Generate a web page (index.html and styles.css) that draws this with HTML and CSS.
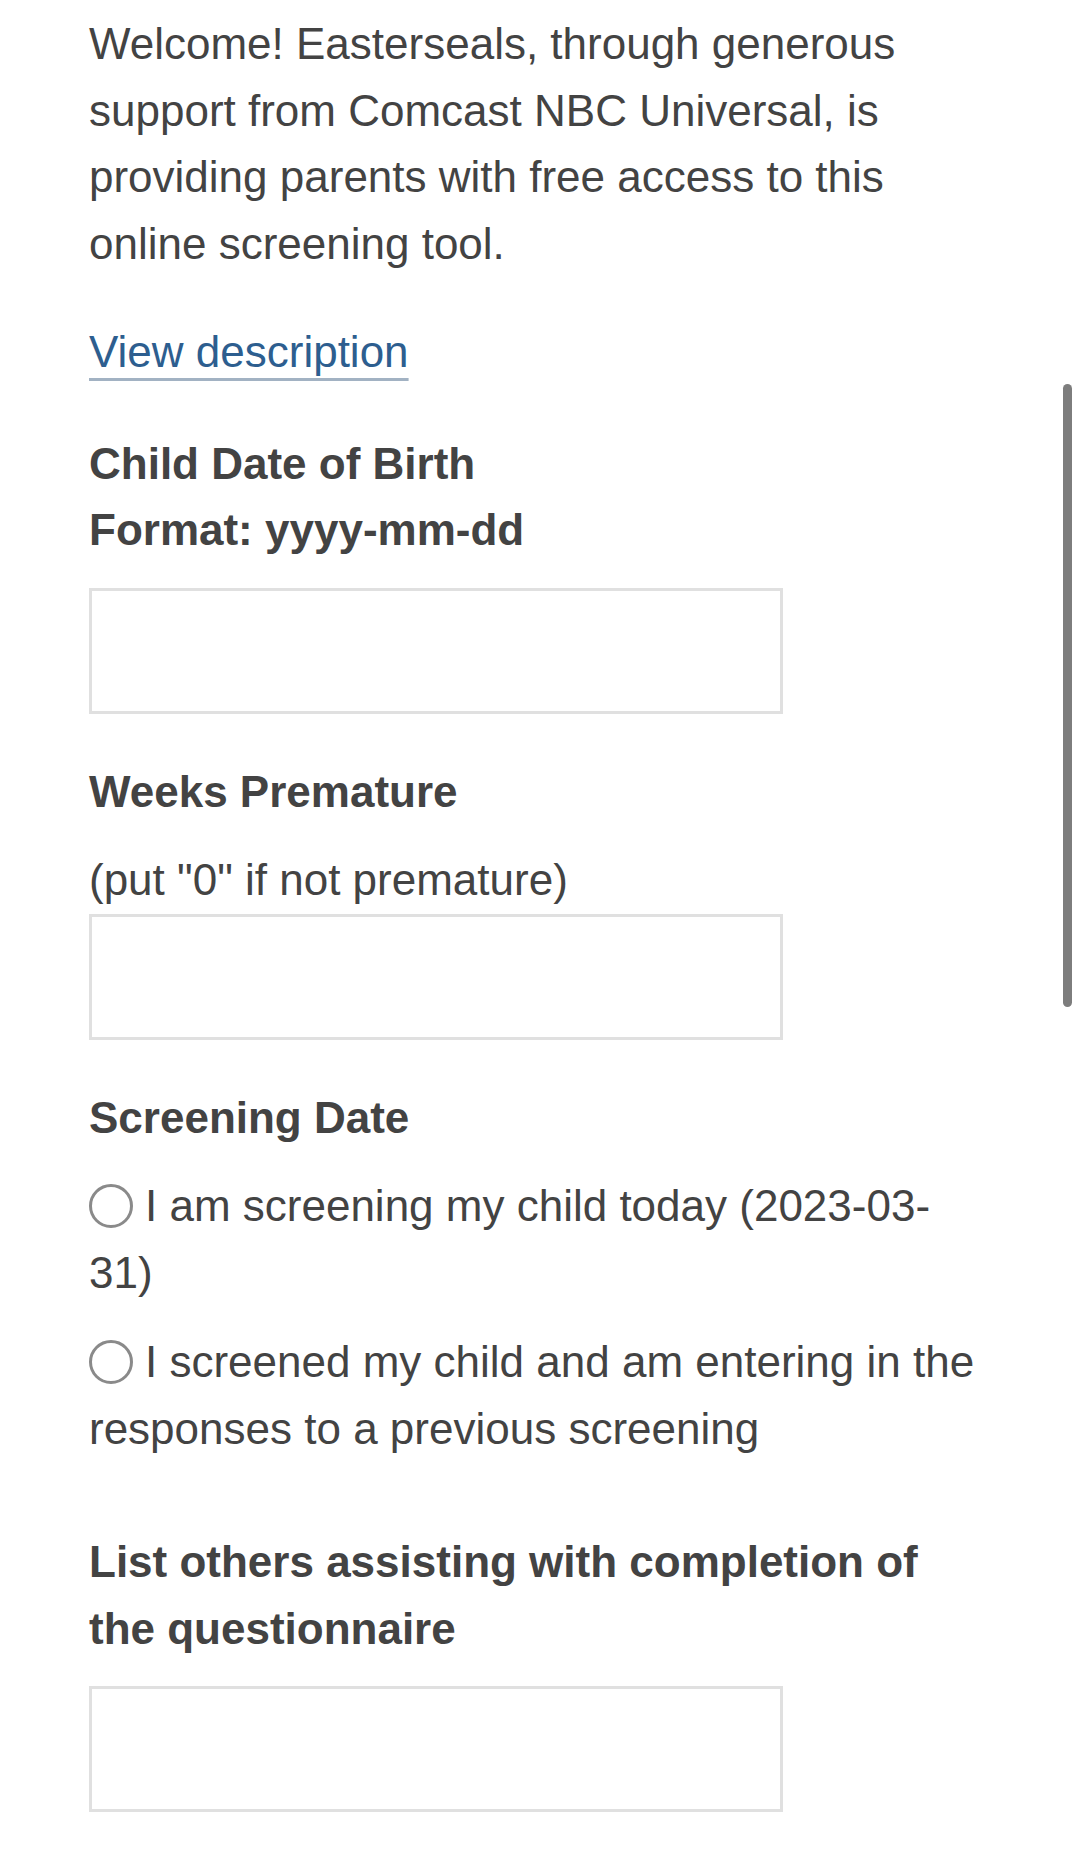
FILE: index.html
```html
<!DOCTYPE html>
<html lang="en">
<head>
<meta charset="utf-8">
<title>Screening</title>
<link rel="stylesheet" href="styles.css">
</head>
<body>
<main class="page">
  <p class="intro">Welcome! Easterseals, through generous support from Comcast NBC Universal, is providing parents with free access to this online screening tool.</p>
  <div class="link-row"><a class="desc-link" href="#">View description</a></div>

  <div class="field field-first">
    <label class="label">Child Date of Birth<br>Format: yyyy-mm-dd</label>
    <input class="text-input" type="text">
  </div>

  <div class="field">
    <label class="label">Weeks Premature</label>
    <div class="hint">(put "0" if not premature)</div>
    <input class="text-input text-input-tight" type="text">
  </div>

  <div class="field">
    <div class="label">Screening Date</div>
    <div class="options">
      <div class="option"><span class="radio"></span>I am screening my child today (2023-03-31)</div>
      <div class="option"><span class="radio"></span>I screened my child and am entering in the responses to a previous screening</div>
    </div>
  </div>

  <div class="field field-list">
    <label class="label">List others assisting with completion of the questionnaire</label>
    <input class="text-input" type="text">
  </div>
</main>
<div class="scrollbar"></div>
</body>
</html>
```
FILE: styles.css
```css
html, body {
  margin: 0;
  padding: 0;
  background: #ffffff;
}
body {
  width: 1080px;
  height: 1855px;
  overflow: hidden;
  position: relative;
  font-family: "Liberation Sans", Arial, Helvetica, sans-serif;
  font-size: 44px;
  line-height: 66.7px;
  color: #434343;
}
.page {
  padding: 11px 0 0 89px;
  width: 899px;
}
.intro {
  margin: 0;
}
.link-row {
  margin-top: 41px;
}
.desc-link {
  color: #2d5e8f;
  text-decoration: underline;
  text-decoration-color: #a2b2c3;
  text-decoration-thickness: 3px;
  text-underline-offset: 11px;
}
.field {
  margin-top: 45px;
  display: flex;
  flex-direction: column;
  align-items: flex-start;
}
.field-first {
  margin-top: 45px;
}
.field-list {
  margin-top: 66px;
}
.label {
  font-weight: bold;
  display: block;
}
.hint {
  margin-top: 21px;
}
.text-input {
  display: block;
  box-sizing: border-box;
  width: 694px;
  height: 126px;
  margin: 24px 0 0 0;
  border: 3px solid #e0e0e0;
  background: #fff;
  padding: 0;
  outline: none;
}
.text-input-tight {
  margin-top: 1px;
}
.options {
  margin-top: 21px;
  display: flex;
  flex-direction: column;
  gap: 23px;
}
.radio {
  display: inline-block;
  box-sizing: border-box;
  width: 44px;
  height: 44px;
  border: 3px solid #8a8a8a;
  border-radius: 50%;
  margin-right: 12px;
  vertical-align: -7px;
}
.scrollbar {
  position: absolute;
  left: 1063px;
  top: 384px;
  width: 9px;
  height: 623px;
  border-radius: 5px;
  background: #7d7d7d;
}
```
